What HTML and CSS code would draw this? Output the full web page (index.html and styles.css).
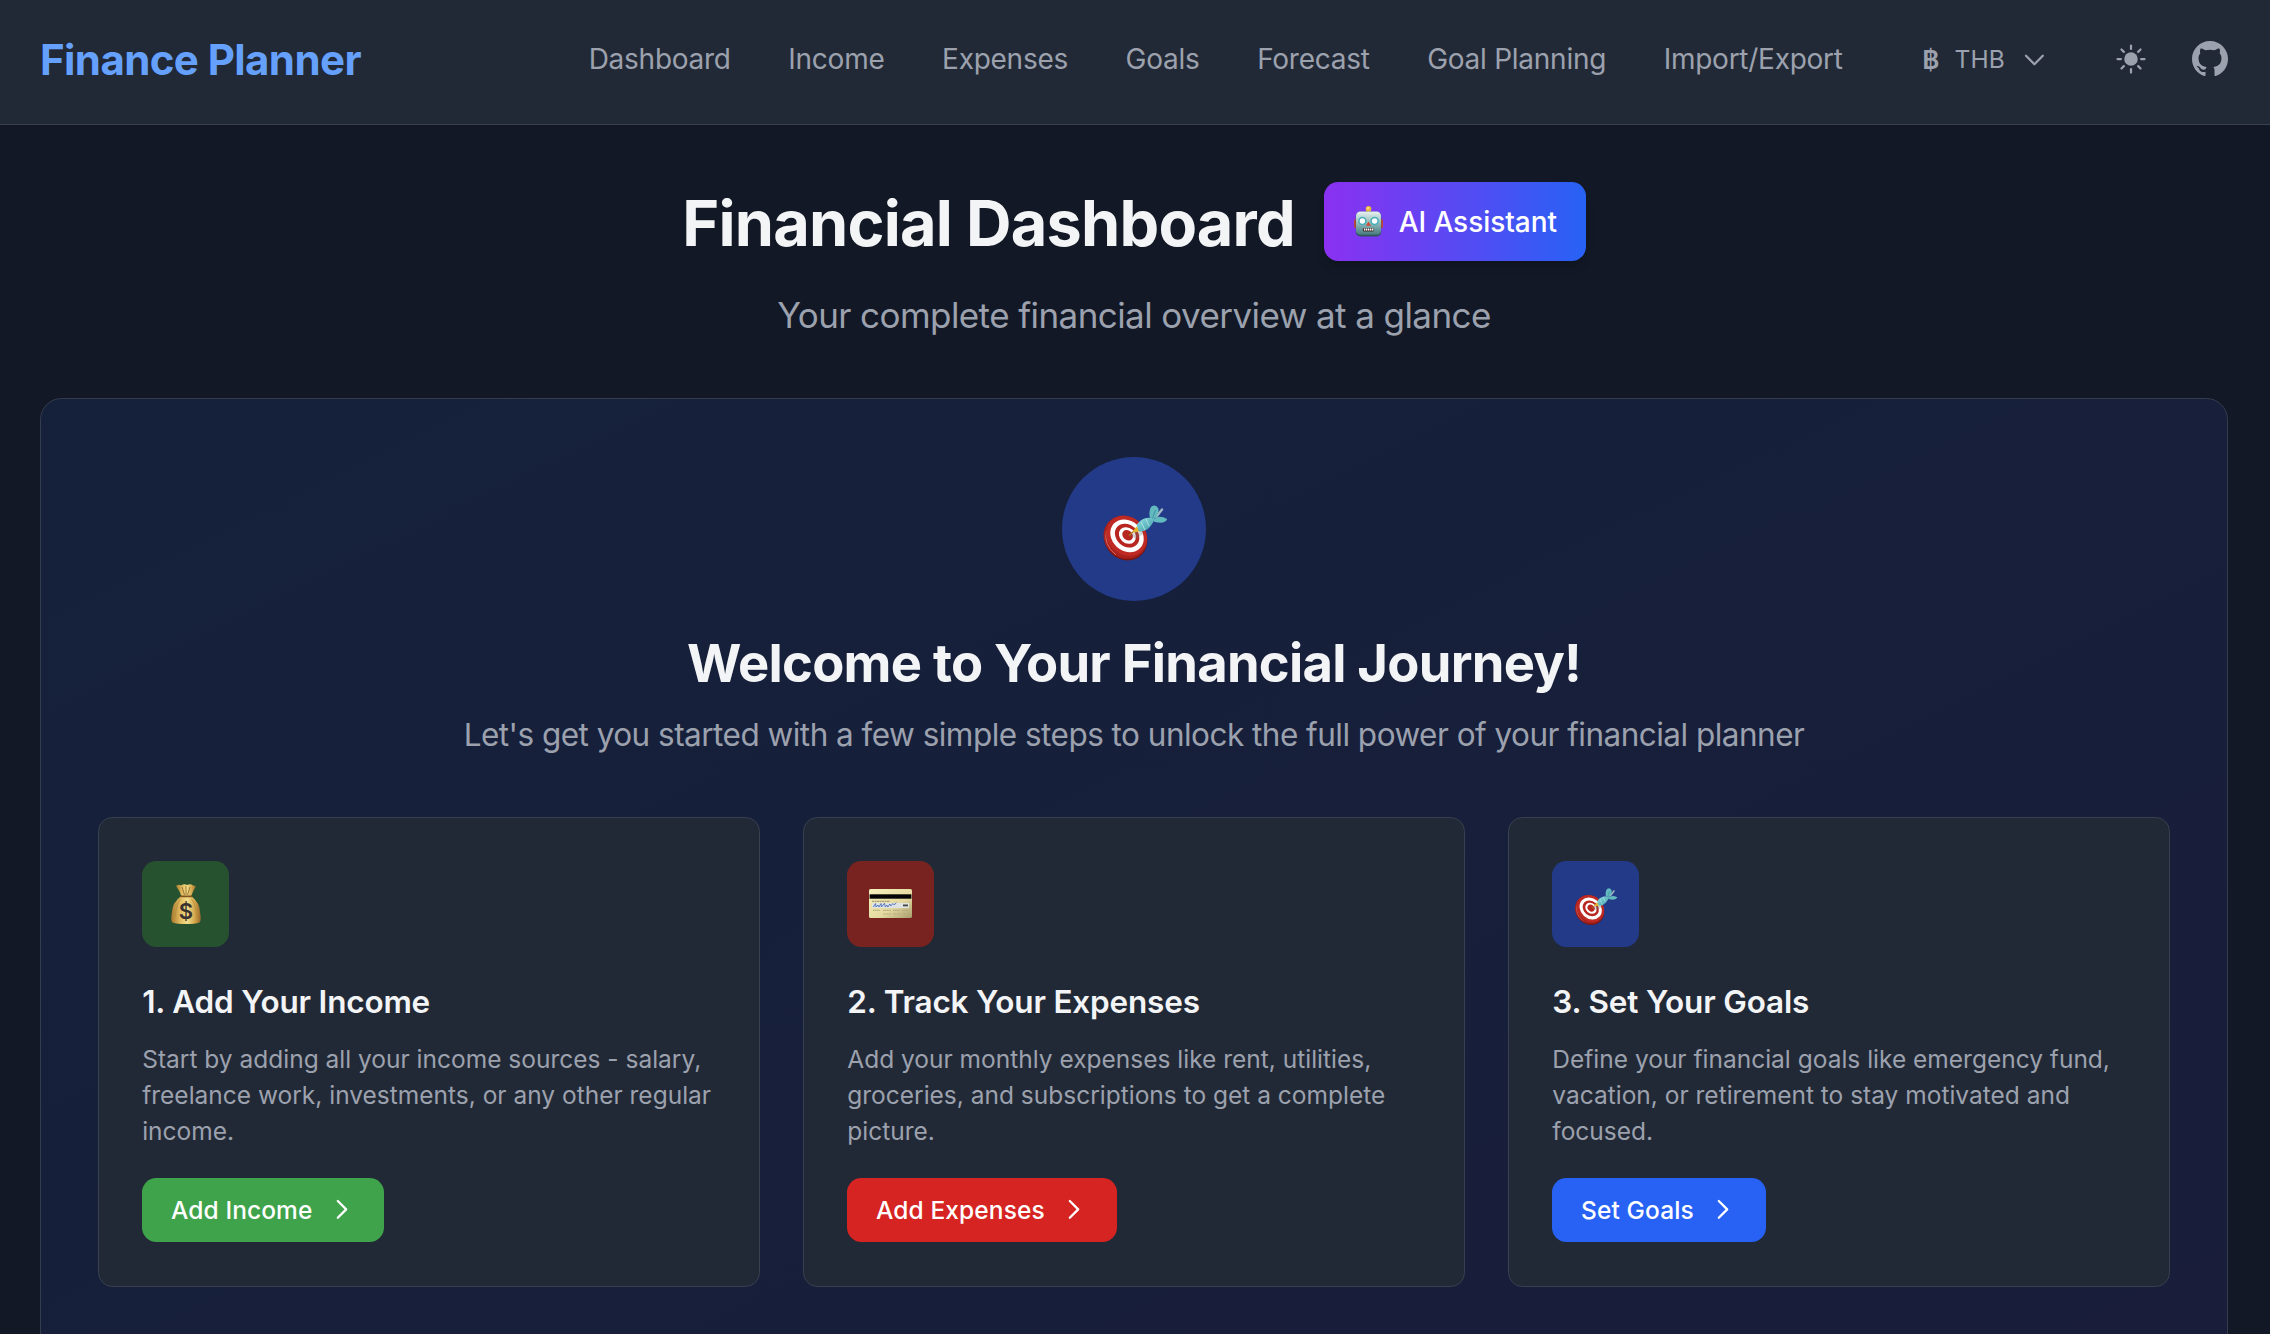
FILE: index.html
```html
<!DOCTYPE html>
<html lang="en">
<head>
<meta charset="utf-8">
<title>Finance Planner</title>
<link rel="stylesheet" href="styles.css">
</head>
<body>
<svg class="defs" aria-hidden="true">
  <defs>
    <linearGradient id="teal" x1="0" y1="0" x2="1" y2="1"><stop offset="0" stop-color="#8fe0e2"/><stop offset="1" stop-color="#3f98a5"/></linearGradient>
    <linearGradient id="gold" x1="0" y1="0" x2="1" y2="0"><stop offset="0" stop-color="#a8792f"/><stop offset=".3" stop-color="#e0bb60"/><stop offset=".55" stop-color="#f2de88"/><stop offset=".8" stop-color="#d2a54a"/><stop offset="1" stop-color="#98682b"/></linearGradient>
    <linearGradient id="metal" x1="0" y1="0" x2="0" y2="1"><stop offset="0" stop-color="#e6f1ef"/><stop offset=".5" stop-color="#8fb9b9"/><stop offset="1" stop-color="#477b80"/></linearGradient>
    <linearGradient id="cream" x1="0" y1="0" x2="1" y2="1"><stop offset="0" stop-color="#f7f2bd"/><stop offset=".6" stop-color="#e4d9a0"/><stop offset="1" stop-color="#a89d6e"/></linearGradient>
    <symbol id="target" viewBox="0 0 66 58">
      <ellipse cx="23.6" cy="34" rx="22.6" ry="20.5" transform="rotate(42 23.6 34)" fill="#7c1512"/>
      <ellipse cx="23.4" cy="32.2" rx="22.8" ry="20.6" transform="rotate(42 23.4 32.2)" fill="#a8211d"/>
      <path d="M4.5 26Q1 39 14 50" fill="none" stroke="#d4695f" stroke-width="1"/>
      <ellipse cx="24.6" cy="30.9" rx="21.6" ry="18.8" transform="rotate(42 24.6 30.9)" fill="#c02a24"/>
      <ellipse cx="25" cy="30.8" rx="18" ry="15" transform="rotate(42 25 30.8)" fill="#fff"/>
      <ellipse cx="25.1" cy="30.6" rx="13.2" ry="10.8" transform="rotate(42 25.1 30.6)" fill="#b82620"/>
      <ellipse cx="25.4" cy="30.5" rx="9.2" ry="7.6" transform="rotate(42 25.4 30.5)" fill="#fff"/>
      <ellipse cx="25.6" cy="30.3" rx="5.8" ry="4.7" transform="rotate(42 25.6 30.3)" fill="#b82620"/>
      <path d="M28 30.5L37 25L42 28L34 34Z" fill="#6d6d6d" opacity=".3"/>
      <path d="M27 30.5L32 26" stroke="#a97a1d" stroke-width="1.4"/>
      <path d="M30.5 26.5L34.5 21.5L39 25.8L33 27.5Z" fill="#e3b42c"/>
      <path d="M54.5 11.5L60 4.5" stroke="#9fb8c4" stroke-width="2.4" stroke-linecap="round"/>
      <path d="M34.7 20Q38 14.5 44 12.9L53 12.3L51 17.5Q47.5 24 42.5 25.8Q38 27.5 36.5 25.5Z" fill="url(#teal)"/>
      <path d="M39 17L43 25M44 14L47 21" stroke="#c9f3f3" stroke-width="1" opacity=".7"/>
      <path d="M47.8 12.4Q46.5 5 49.5 1.5Q53.8-1.4 56.4 3.5Q57.2 9 53 13.6Z" fill="#62b9bf"/>
      <path d="M52 14.2Q57 9.6 65.2 14Q63 19.4 53 17L51 16Z" fill="#62b9bf"/>
      <path d="M50.5 13.5L53.5 5" stroke="#3a8996" stroke-width=".8"/>
    </symbol>
    <symbol id="chevron-right" viewBox="0 0 24 24"><path d="M9 5l7 7-7 7" fill="none" stroke="currentColor" stroke-width="1.9" stroke-linecap="round" stroke-linejoin="round"/></symbol>
  </defs>
</svg>

<header class="topbar">
  <a class="brand">Finance Planner</a>
  <nav class="nav">
    <a>Dashboard</a><a>Income</a><a>Expenses</a><a>Goals</a><a>Forecast</a><a>Goal Planning</a><a>Import/Export</a>
  </nav>
  <div class="currency">
    <span class="currency-sign">฿</span><span>THB</span>
    <svg class="chevron-down" viewBox="0 0 24 24"><path d="M19 9l-7 7-7-7" fill="none" stroke="currentColor" stroke-width="1.9" stroke-linecap="round" stroke-linejoin="round"/></svg>
  </div>
  <svg class="sun" viewBox="0 0 24 24"><circle cx="12" cy="12" r="4.5" fill="currentColor"/><path d="M12 3v2.25M12 18.75V21M3 12h2.25M18.75 12H21M5.64 5.64l1.59 1.59M16.77 16.77l1.59 1.59M5.64 18.36l1.59-1.59M16.77 7.23l1.59-1.59" stroke="currentColor" stroke-width="1.5" stroke-linecap="round"/></svg>
  <svg class="github" viewBox="0 0 24 24"><path fill="currentColor" d="M12 0c-6.626 0-12 5.373-12 12 0 5.302 3.438 9.8 8.207 11.387.599.111.793-.261.793-.577v-2.234c-3.338.726-4.033-1.416-4.033-1.416-.546-1.387-1.333-1.756-1.333-1.756-1.089-.745.083-.729.083-.729 1.205.084 1.839 1.237 1.839 1.237 1.07 1.834 2.807 1.304 3.492.997.107-.775.418-1.305.762-1.604-2.665-.305-5.467-1.334-5.467-5.931 0-1.311.469-2.381 1.236-3.221-.124-.303-.535-1.524.117-3.176 0 0 1.008-.322 3.301 1.23.957-.266 1.983-.399 3.003-.404 1.02.005 2.047.138 3.006.404 2.291-1.552 3.297-1.23 3.297-1.23.653 1.653.242 2.874.118 3.176.77.84 1.235 1.911 1.235 3.221 0 4.609-2.807 5.624-5.479 5.921.43.372.823 1.102.823 2.222v3.293c0 .319.192.694.801.576 4.765-1.589 8.199-6.086 8.199-11.386 0-6.627-5.373-12-12-12z"/></svg>
</header>

<main class="page">
  <div class="heading-row">
    <h1 class="title">Financial Dashboard</h1>
    <button class="assistant">
      <svg class="robot" viewBox="0 0 29 31">
        <rect x="0" y="13" width="4" height="9" rx="1.5" fill="#b9483a"/><rect x="25" y="13" width="4" height="9" rx="1.5" fill="#b9483a"/>
        <rect x="12.5" y="3" width="4" height="4" fill="#5c4678"/><ellipse cx="14.5" cy="6" rx="3.4" ry="1.6" fill="#56406c"/>
        <circle cx="14.5" cy="2.9" r="2.8" fill="#eeb63c"/><circle cx="14" cy="2.2" r="1.1" fill="#fbe08a"/>
        <rect x="1.8" y="5.8" width="25.4" height="24.6" rx="4.5" fill="#2f555c"/>
        <rect x="2" y="5.6" width="25" height="23.2" rx="4.3" fill="url(#metal)"/>
        <circle cx="8.4" cy="15" r="4.2" fill="#45aebb"/><circle cx="20.6" cy="15" r="4.2" fill="#45aebb"/>
        <circle cx="8.4" cy="15" r="2.7" fill="#fff"/><circle cx="20.6" cy="15" r="2.7" fill="#fff"/>
        <path d="M14.5 15.4l2.6 4.4h-5.2z" fill="#d34c35"/>
        <rect x="8.8" y="22" width="11.4" height="3.4" rx="1.5" fill="#43302f"/>
        <path d="M10 23.5h9.4" stroke="#fff" stroke-width="2.2" stroke-dasharray="1.4 .6"/>
      </svg>
      <span>AI Assistant</span>
    </button>
  </div>
  <p class="subtitle">Your complete financial overview at a glance</p>

  <section class="welcome">
    <div class="badge"><svg class="target-lg"><use href="#target"/></svg></div>
    <h2 class="welcome-title">Welcome to Your Financial Journey!</h2>
    <p class="welcome-text">Let's get you started with a few simple steps to unlock the full power of your financial planner</p>

    <div class="steps">
      <article class="step">
        <div class="tile tile-green">
          <svg class="bag" viewBox="0 0 30 40">
            <path d="M5 2Q8 0 10 1.5Q13-.5 16 1Q20-.5 22 1.5L25 2Q22 7 20 12.5H10.5Q9 7 5 2Z" fill="url(#gold)"/>
            <path d="M11 3l2.5 8M19 3l-2.5 8M15 2v9" stroke="#8d5f25" stroke-width=".8"/>
            <path d="M10.5 12Q1 18 .7 30Q-.5 37 1.5 38.5Q6 40 15 40T28.5 38.5Q30.5 36 29.3 30Q29 18 20 12Z" fill="url(#gold)"/>
            <path d="M9.5 15Q5 21 4 33M20.5 15Q25 21 26 33" fill="none" stroke="#b98a3a" stroke-width=".8"/>
            <path d="M10 12.3h10.5" stroke="#80531f" stroke-width="1.8" stroke-linecap="round"/>
            <text x="15" y="34.6" class="bag-sign">$</text>
          </svg>
        </div>
        <h3 class="step-title">1. Add Your Income</h3>
        <p class="step-text">Start by adding all your income sources - salary, freelance work, investments, or any other regular income.</p>
        <button class="action action-green">Add Income<svg class="arrow"><use href="#chevron-right"/></svg></button>
      </article>
      <article class="step">
        <div class="tile tile-red">
          <svg class="card" viewBox="0 0 43 29">
            <rect width="43" height="29" rx="1.6" fill="url(#cream)"/>
            <rect x=".6" y="5.3" width="41.8" height="4.4" fill="#050505"/>
            <path d="M3 12.3h18" stroke="#8d8866" stroke-width=".9" stroke-dasharray="2 .5"/>
            <rect x="3" y="14" width="37" height="5" fill="#dfe2e2"/>
            <path d="M4.5 18l2-3.5.5 3.5 2-2 1 2 2-3.5.5 3.5 3-3.8.8 3.8 1.5-2 1 2 2-3 1 2 2-2.5 1.5 1.5 2-2.5" fill="none" stroke="#4d72bd" stroke-width=".9"/>
            <path d="M34 16.4h5" stroke="#444" stroke-width="1.8"/>
            <path d="M4 21.4h7M14 21.4h8M24 21.4h7M33 21.4h7M14 25h8M24 25h7M33 25h7" stroke="#b5ab7d" stroke-width="1.2" stroke-dasharray="1.3 .5"/>
          </svg>
        </div>
        <h3 class="step-title">2. Track Your Expenses</h3>
        <p class="step-text">Add your monthly expenses like rent, utilities, groceries, and subscriptions to get a complete picture.</p>
        <button class="action action-red">Add Expenses<svg class="arrow"><use href="#chevron-right"/></svg></button>
      </article>
      <article class="step">
        <div class="tile tile-blue"><svg class="target-sm"><use href="#target"/></svg></div>
        <h3 class="step-title">3. Set Your Goals</h3>
        <p class="step-text">Define your financial goals like emergency fund, vacation, or retirement to stay motivated and focused.</p>
        <button class="action action-blue">Set Goals<svg class="arrow"><use href="#chevron-right"/></svg></button>
      </article>
    </div>
  </section>
</main>
</body>
</html>
```
FILE: styles.css
```css
* { box-sizing: border-box; margin: 0; }

html { background: #121825; }

body {
  height: 1334px;
  overflow: hidden;
  background: #121825;
  color: #9ca1ae;
  font-family: Inter, "Noto Sans", sans-serif;
}

svg { display: block; flex: none; }
button { border: 0; font-family: inherit; color: #fff; }
.defs { position: absolute; width: 0; height: 0; }

/* Top bar */
.topbar {
  display: flex;
  align-items: center;
  height: 125px;
  padding: 0 42px 6px 40px;
  background: #222936;
  border-bottom: 1px solid #374050;
  white-space: nowrap;
}
.brand { font-size: 42px; font-weight: 700; letter-spacing: -0.0141em; color: #65a1fc; }
.nav { display: flex; gap: 57.6px; margin-left: auto; font-size: 28px; letter-spacing: -0.0093em; }
.currency { display: flex; align-items: center; margin-left: 79.5px; font-size: 24.5px; letter-spacing: 0.006em; }
.currency-sign { margin-right: 15px; font-size: 26px; font-weight: 600; }
.chevron-down { width: 28.8px; height: 28.8px; margin-left: 15.2px; }
.sun { width: 36px; height: 36px; margin-left: 64px; }
.github { width: 36px; height: 36px; margin-left: 43px; }

/* Page heading */
.page { width: 2268px; height: 1209px; padding: 57px 40px 0; overflow: hidden; }
.heading-row { display: flex; justify-content: center; align-items: center; gap: 28.8px; height: 79px; }
.title { padding-top: 3px; font-size: 63px; line-height: 72px; letter-spacing: -0.0127em; color: #f3f4f6; }
.assistant {
  display: flex;
  align-items: center;
  width: 262px;
  height: 79px;
  padding: 0 0 0 30.5px;
  border-radius: 14.4px;
  background: linear-gradient(90deg, #8b31f1, #2762f5);
  box-shadow: 0 7px 11px -2px rgba(0, 0, 0, 0.12), 0 4px 7px -4px rgba(0, 0, 0, 0.12);
  font-size: 28px;
  font-weight: 500;
  letter-spacing: -0.002em;
  white-space: nowrap;
}
.robot { width: 29px; height: 31px; margin-right: 15.5px; }
.subtitle { margin-top: 29px; font-size: 35px; line-height: 50.4px; letter-spacing: -0.0165em; text-align: center; }

/* Welcome panel */
.welcome {
  height: 1080px;
  margin-top: 57.6px;
  padding: 57.6px 57px;
  border: 1px solid #343d4d;
  border-radius: 21.6px;
  background: linear-gradient(to bottom right, #15213b, #191d3a);
  text-align: center;
}
.badge {
  display: flex;
  justify-content: center;
  align-items: center;
  width: 144px;
  height: 144px;
  margin: 0 auto 30px;
  border-radius: 50%;
  background: #223a87;
}
.target-lg { width: 66px; height: 58px; margin-top: 10px; margin-left: 1px; }
.welcome-title { font-size: 52.5px; line-height: 64.8px; letter-spacing: -0.0142em; color: #f3f4f6; }
.welcome-text { margin-top: 14.4px; font-size: 31.5px; line-height: 50.4px; letter-spacing: -0.0166em; }

/* Steps */
.steps { display: grid; grid-template-columns: repeat(3, 1fr); gap: 43.2px; margin-top: 56.4px; text-align: left; }
.step {
  padding: 43.2px 43.2px 44px;
  border: 1px solid #374050;
  border-radius: 14.4px;
  background: #222936;
}
.tile { display: flex; justify-content: center; align-items: center; width: 86.4px; height: 86.4px; border-radius: 14.4px; }
.tile-green { background: #27522f; }
.tile-red { background: #782320; }
.tile-blue { background: #223a87; }
.bag { width: 30px; height: 40px; margin-left: 1px; }
.bag-sign { font: 600 22px Inter, sans-serif; fill: #38312f; text-anchor: middle; }
.card { width: 43px; height: 29px; }
.target-sm { width: 44px; height: 38.6px; margin-top: 6px; }
.step-title { margin-top: 29.6px; font-size: 31.5px; font-weight: 600; line-height: 50.4px; letter-spacing: -0.0058em; color: #f3f4f6; }
.step-text { margin-top: 13.6px; font-size: 24.5px; line-height: 36px; letter-spacing: -0.0001em; }
.action {
  display: inline-flex;
  align-items: center;
  gap: 14.4px;
  height: 64px;
  margin-top: 28.8px;
  padding: 0 28.8px;
  border-radius: 14.4px;
  font-size: 24.5px;
  font-weight: 500;
  letter-spacing: 0.004em;
}
.action-green { background: #3fa34b; }
.action-red { background: #d62422; }
.action-blue { background: #2762f5; }
.arrow { width: 28.8px; height: 28.8px; }
```
